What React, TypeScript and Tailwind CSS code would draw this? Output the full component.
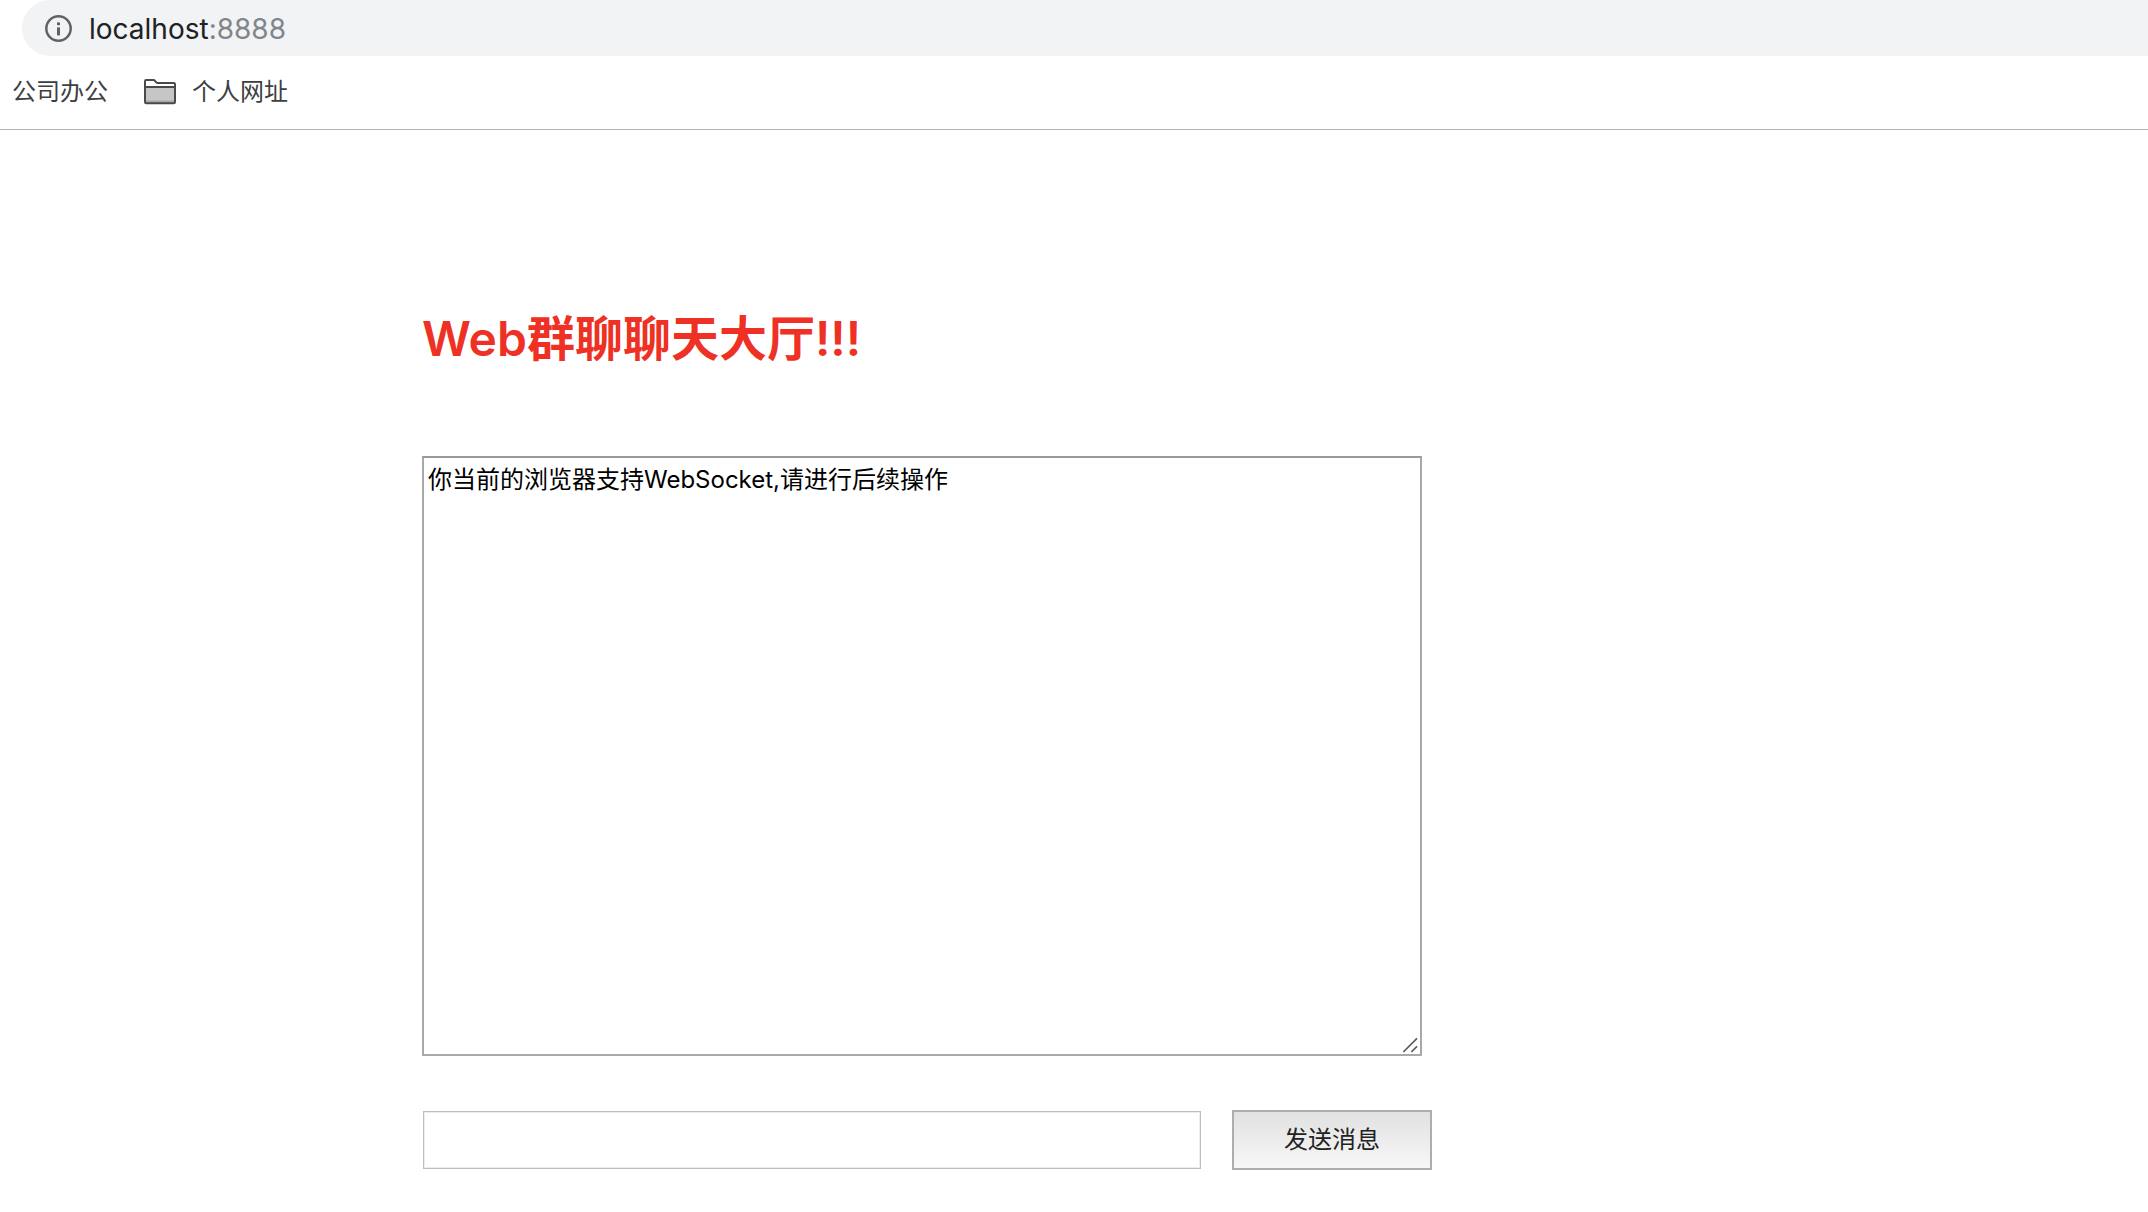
import React from "react";

function InfoIcon() {
  return (
    <svg viewBox="0 0 28 28" className="size-7 shrink-0" aria-hidden="true">
      <circle cx="14.5" cy="13.5" r="12.2" fill="none" stroke="#5f6368" strokeWidth="2.5" />
      <rect x="13" y="7.4" width="3" height="2.8" fill="#5f6368" />
      <rect x="13" y="12.4" width="3" height="8" fill="#5f6368" />
    </svg>
  );
}

function FolderIcon() {
  return (
    <svg viewBox="0 0 32 26" className="h-[26px] w-8 shrink-0" aria-hidden="true">
      <path d="M1 8H31V24H1Z" fill="#c6c6c6" />
      <path d="M1 21.5H31V24H1Z" fill="#a8a8a8" />
      <path d="M1 8H31" stroke="#4a4a4a" strokeWidth="2" />
      <path d="M1 23V2.2Q1 1 2.2 1H9.4Q10.4 1 11 1.8L12.3 3.4Q12.8 4 13.8 4H29.8Q31 4 31 5.2V23Q31 24.2 29.8 24.2H2.2Q1 24.2 1 23Z" fill="none" stroke="#4a4a4a" strokeWidth="2" />
    </svg>
  );
}

function ResizeGrip() {
  return (
    <svg viewBox="0 0 16 16" className="pointer-events-none absolute right-1 bottom-[3px] size-4" aria-hidden="true">
      <path d="M1.3 15L15 1.3M9.3 15L15 9.3" stroke="#5c5c5c" strokeWidth="1.7" fill="none" />
    </svg>
  );
}

export default function App() {
  return (
    <div className="min-h-screen bg-white font-['Inter','Noto_Sans_CJK_SC',sans-serif]">
      <header className="border-b border-[#b4b4b4]">
        <div className="ml-[22px] flex h-14 items-center gap-[17px] rounded-l-full bg-[#f1f3f4] pt-px pl-[22px]">
          <InfoIcon />
          <div className="text-[28px] leading-8 text-[#202124]">
            localhost<span className="text-[#80868b]">:8888</span>
          </div>
        </div>
        <nav className="flex h-[73px] items-center gap-9 pb-0.5 pl-3 text-2xl text-[#3c4043]">
          <a href="#office">公司办公</a>
          <a href="#personal" className="flex items-center gap-4">
            <FolderIcon />
            个人网址
          </a>
        </nav>
      </header>
      <main className="pt-[177px] pl-[422px]">
        <h1 className="text-5xl leading-[64px] font-semibold text-[#ee3124]">Web群聊聊天大厅!!!</h1>
        <form className="mt-[85px]" onSubmit={(e) => e.preventDefault()}>
          <div className="relative w-[1000px]">
            <textarea
              aria-label="聊天记录"
              className="block h-[600px] w-full resize-none border-2 border-[#a9a9a9] border-t-[#999] px-1 py-1 text-2xl leading-9 text-black outline-none"
              defaultValue="你当前的浏览器支持WebSocket,请进行后续操作"
            />
            <ResizeGrip />
          </div>
          <div className="mt-[54px] flex items-center gap-[30px]">
            <input
              type="text"
              aria-label="消息"
              className="mx-px h-[58px] w-[778px] border border-[#bdbdbd] px-2 text-2xl inset-ring inset-ring-[#ededed] outline-none"
            />
            <button
              type="submit"
              className="h-[60px] w-[200px] border-2 border-[#adadad] bg-linear-to-b from-[#e1e1e1] to-[#f7f7f7] text-2xl text-[#222]"
            >
              发送消息
            </button>
          </div>
        </form>
      </main>
    </div>
  );
}
